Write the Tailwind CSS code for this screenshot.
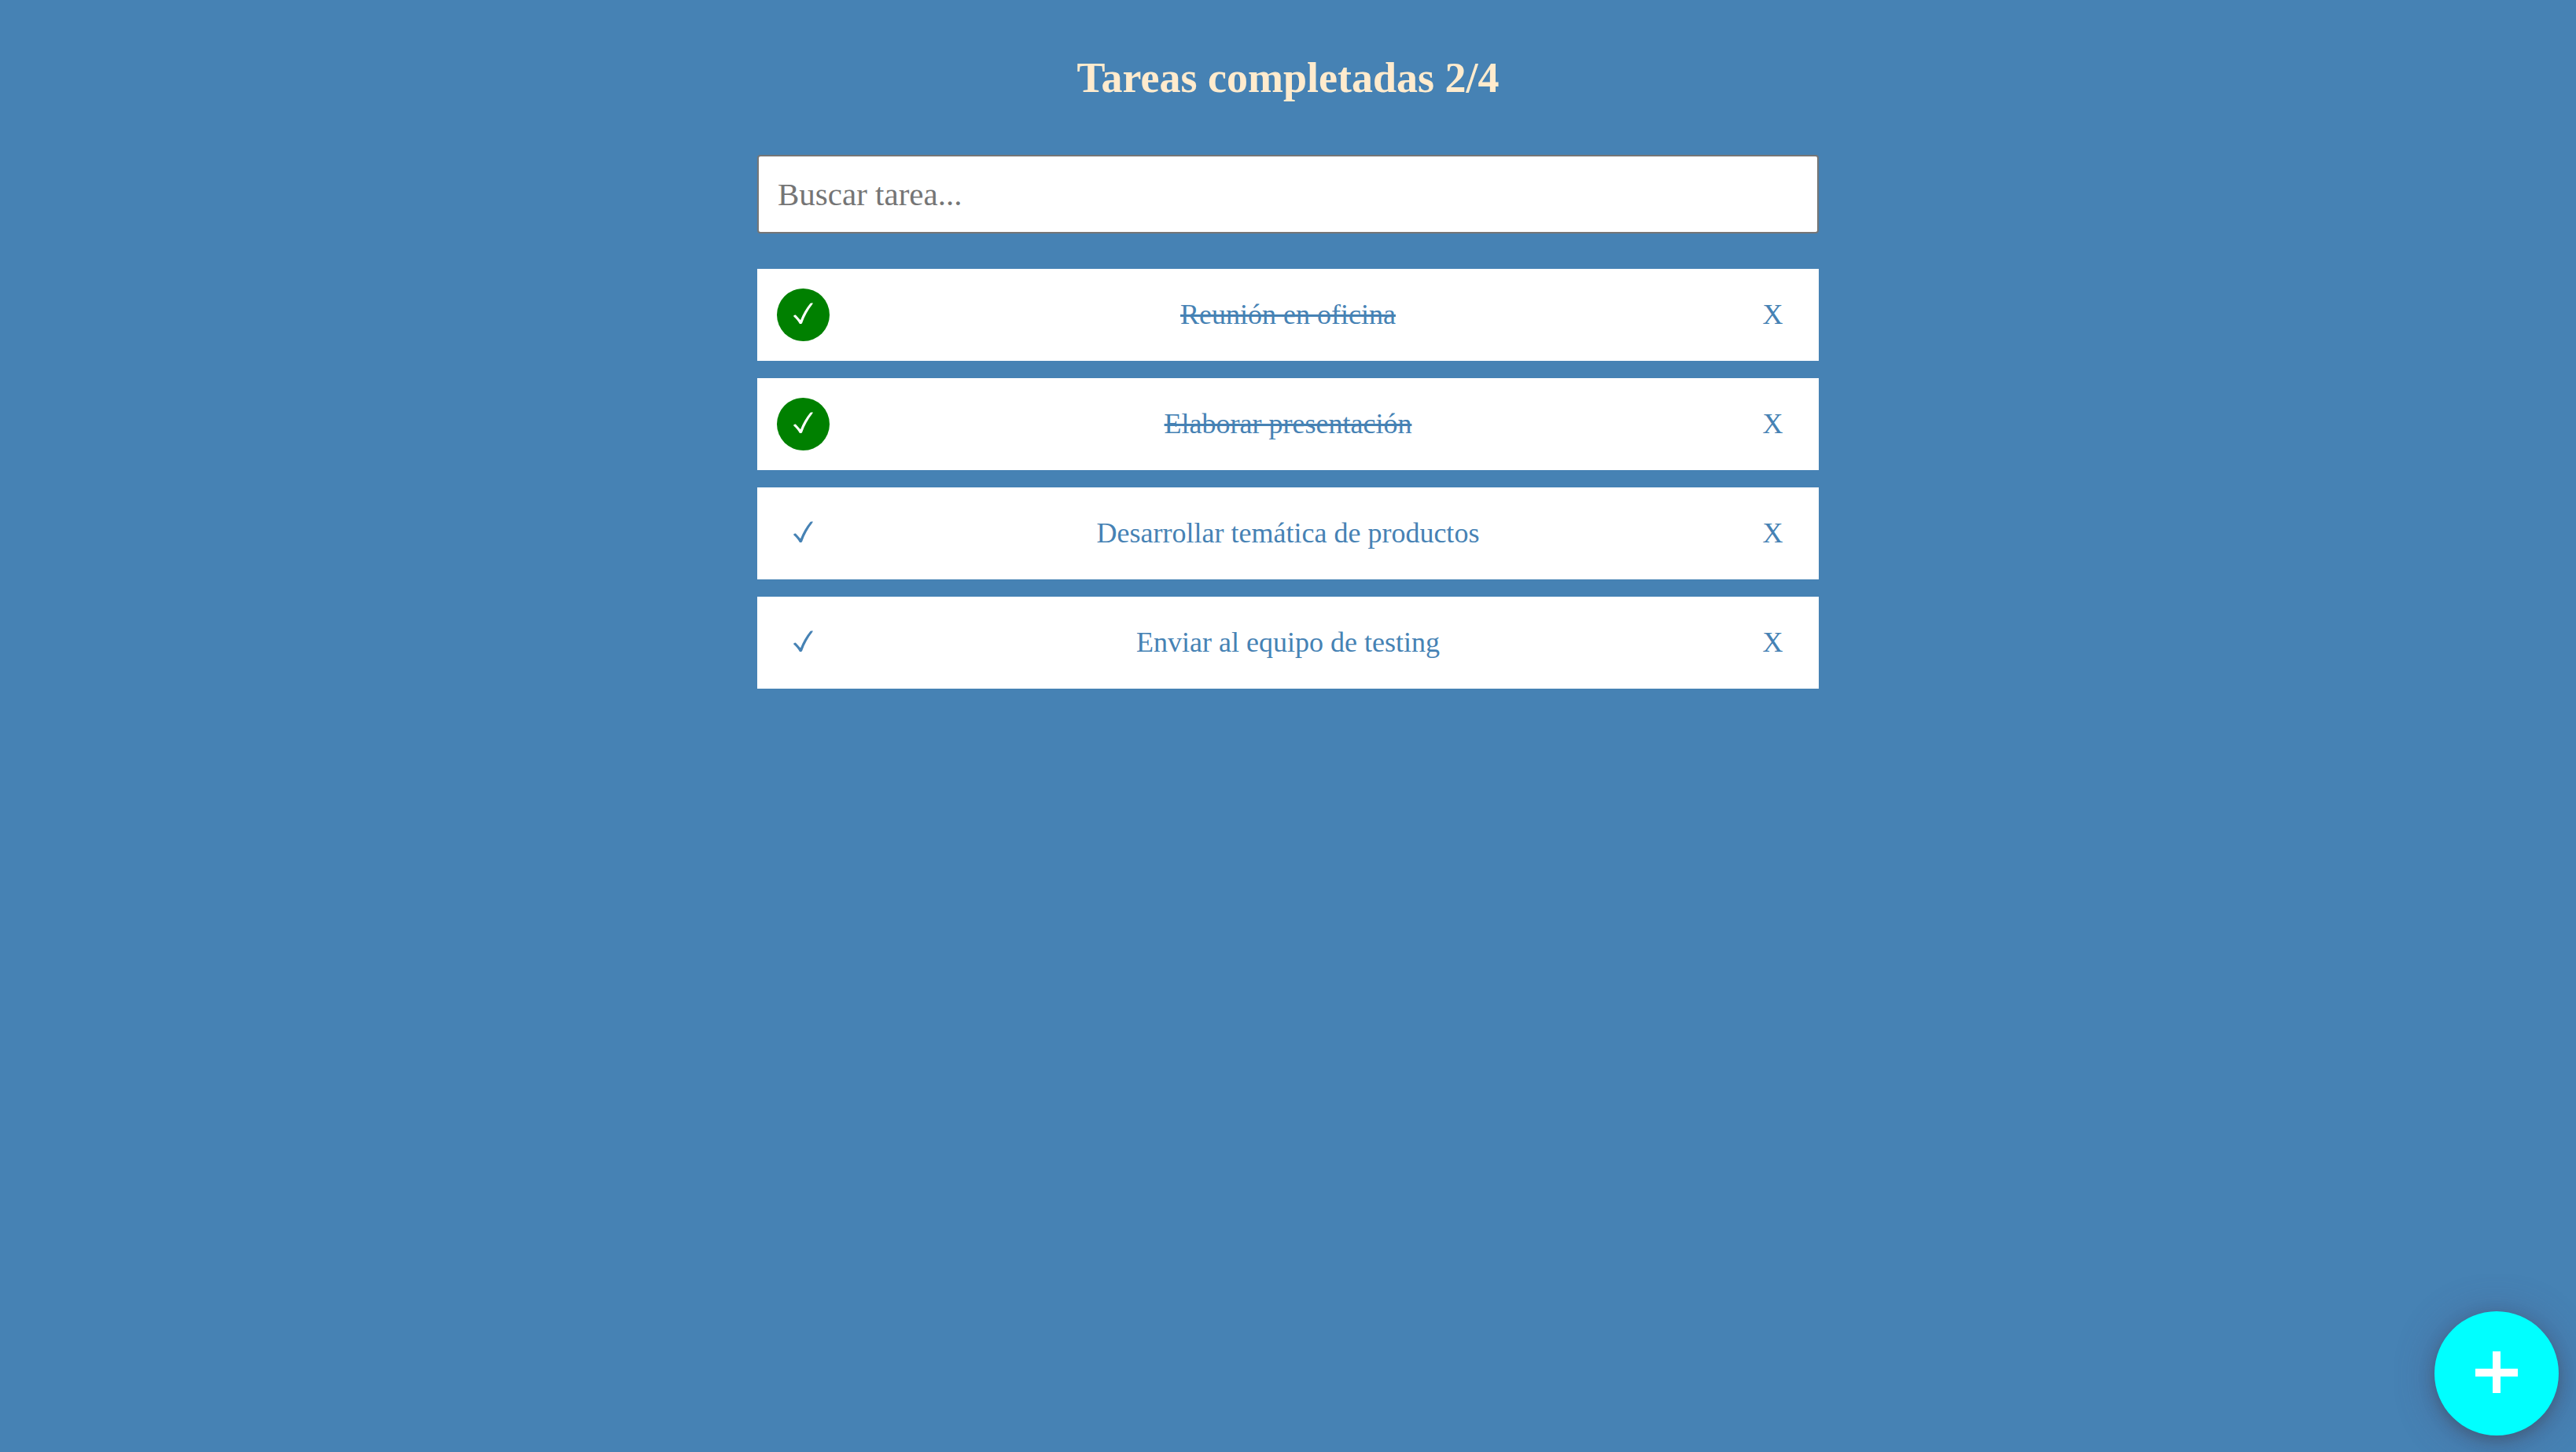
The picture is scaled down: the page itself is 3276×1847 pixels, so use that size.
<!DOCTYPE html>
<html lang="es">
<head>
<meta charset="utf-8">
<meta name="viewport" content="width=device-width, initial-scale=1">
<title>Tareas</title>
<script src="https://cdn.jsdelivr.net/npm/@tailwindcss/browser@4"></script>
</head>
<body class="min-h-screen bg-[#4682b4] font-['Liberation_Serif',serif]">
<svg class="hidden" aria-hidden="true">
  <symbol id="check" viewBox="0 0 67 67">
    <path fill="currentColor" d="M21.2 35.6 21.6 34 23.8 33.6 30 40.2 C33 32.5 37.2 25 42.6 18.8 L45.6 18.2 L45.4 19.8 C39.8 26.8 35.2 35 32 44.2 L31 45 29 45 C26.8 41.4 24.2 38.2 21.2 35.6Z"/>
  </symbol>
</svg>
<main class="mx-auto flex w-full max-w-[1350px] flex-col pt-[69px]">
  <h1 class="text-center text-[54px] leading-[60px] font-bold text-[#ffebcd]">Tareas completadas 2/4</h1>
  <input type="text" aria-label="Buscar tarea" placeholder="Buscar tarea..." class="mt-[68px] h-[100px] w-full rounded-[4px] border-2 border-[#767676] bg-white px-6 text-[41px] text-black placeholder:text-[#757575]">
  <ul class="mt-[45px] flex flex-col gap-[22px] text-[36px] leading-[41px] text-[#4682b4]">
    <li class="flex items-center justify-between bg-white p-[25px]">
      <button type="button" aria-label="Completar" class="size-[67px] rounded-full bg-[#008000] text-white"><svg class="size-full"><use href="#check"/></svg></button>
      <p class="line-through decoration-[3px]">Reunión en oficina</p>
      <button type="button" class="size-[67px]">X</button>
    </li>
    <li class="flex items-center justify-between bg-white p-[25px]">
      <button type="button" aria-label="Completar" class="size-[67px] rounded-full bg-[#008000] text-white"><svg class="size-full"><use href="#check"/></svg></button>
      <p class="line-through decoration-[3px]">Elaborar presentación</p>
      <button type="button" class="size-[67px]">X</button>
    </li>
    <li class="flex items-center justify-between bg-white p-[25px]">
      <button type="button" aria-label="Completar" class="size-[67px] rounded-full"><svg class="size-full"><use href="#check"/></svg></button>
      <p>Desarrollar temática de productos</p>
      <button type="button" class="size-[67px]">X</button>
    </li>
    <li class="flex items-center justify-between bg-white p-[25px]">
      <button type="button" aria-label="Completar" class="size-[67px] rounded-full"><svg class="size-full"><use href="#check"/></svg></button>
      <p>Enviar al equipo de testing</p>
      <button type="button" class="size-[67px]">X</button>
    </li>
  </ul>
</main>
<button type="button" aria-label="Agregar tarea" class="fixed right-[22px] bottom-[21px] size-[158px] rounded-full bg-[#00ffff] text-white shadow-[0_6px_18px_rgba(56,56,56,0.35),0_4px_50px_rgba(70,70,110,0.45)]">
  <svg viewBox="0 0 158 158" class="size-full"><path fill="currentColor" d="M74 51h10v22h22v10H84v21H74V83H52V73h22z"/></svg>
</button>
</body>
</html>
